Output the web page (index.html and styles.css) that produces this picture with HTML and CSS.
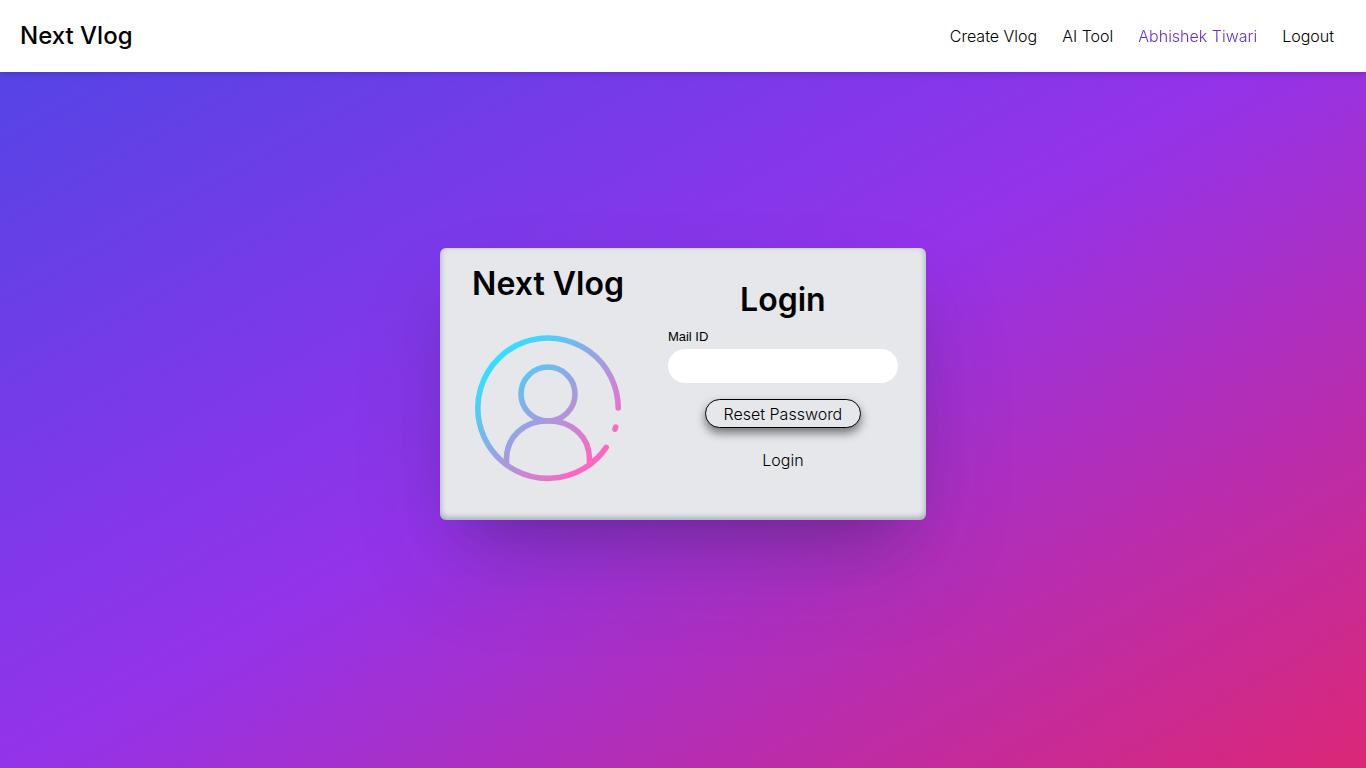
FILE: index.html
```html
<!DOCTYPE html>
<html lang="en">
<head>
<meta charset="utf-8">
<meta name="viewport" content="width=device-width, initial-scale=1">
<title>Next Vlog</title>
<link rel="stylesheet" href="styles.css">
</head>
<body>
<header class="navbar">
  <a class="brand" href="#">Next Vlog</a>
  <nav class="nav-links">
    <a href="#">Create Vlog</a>
    <a href="#">AI Tool</a>
    <a class="user-name" href="#">Abhishek Tiwari</a>
    <a href="#">Logout</a>
  </nav>
</header>
<main class="page">
  <section class="card">
    <div class="intro">
      <h1 class="title">Next Vlog</h1>
      <svg class="avatar" viewBox="0 0 150 150" fill="none" stroke="url(#tint)" stroke-width="5.6" stroke-linecap="round" aria-hidden="true">
        <defs>
          <linearGradient id="tint" gradientUnits="userSpaceOnUse" x1="24" y1="28" x2="120" y2="124">
            <stop offset="0" stop-color="#33dfff"/>
            <stop offset="1" stop-color="#ff66c4"/>
          </linearGradient>
        </defs>
        <path d="M145.200 75A70.200 70.200 0 1 0 133.200 114.400"/>
        <path d="M142.700 94.200L142 96.200"/>
        <circle cx="75" cy="61" r="27"/>
        <path d="M33.500 129V126C33.500 104 51 87.700 75 87.700S116.500 104 116.500 126V129"/>
      </svg>
    </div>
    <form class="login">
      <h2 class="title">Login</h2>
      <div class="field">
        <label for="mail">Mail ID</label>
        <input id="mail" type="email">
      </div>
      <button class="reset" type="button">Reset Password</button>
      <a class="login-link" href="#">Login</a>
    </form>
  </section>
</main>
</body>
</html>
```
FILE: styles.css
```css
* { box-sizing: border-box; }
body {
  margin: 0;
  min-height: 100vh;
  display: flex;
  flex-direction: column;
  font: 300 16px/24px Inter, sans-serif;
  color: #000;
  background: linear-gradient(to bottom right, #4f46e5, #9333ea, #db2777);
}
a { color: inherit; text-decoration: none; }
.navbar {
  display: flex;
  align-items: center;
  justify-content: space-between;
  height: 72px;
  padding: 0 32px 0 20px;
  background: #fff;
  box-shadow: 0 4px 6px -1px rgba(0, 0, 0, 0.1), 0 2px 4px -2px rgba(0, 0, 0, 0.1);
}
.brand { font-size: 24px; line-height: 32px; font-weight: 500; }
.nav-links { display: flex; gap: 25px; }
.nav-links .user-name {
  color: transparent;
  background: linear-gradient(to bottom, #9333ea, #3b1fc0);
  background-clip: text;
  -webkit-background-clip: text;
}
.page {
  flex: 1;
  display: flex;
  align-items: center;
  justify-content: center;
  padding-bottom: 72px;
}
.card {
  display: flex;
  padding: 16px 28px 37px 32px;
  border-radius: 6px;
  background: #e5e7eb;
  box-shadow: rgba(50, 50, 93, 0.25) 0 50px 100px -20px,
    rgba(0, 0, 0, 0.3) 0 30px 60px -30px,
    rgba(10, 37, 64, 0.35) 0 -2px 6px 0 inset;
}
.intro, .login { display: flex; flex-direction: column; align-items: center; }
.intro { gap: 29px; }
.title { margin: 0; font-size: 32px; line-height: 40px; font-weight: 600; }
.avatar { width: 150px; height: 150px; }
.login { margin-left: 44px; padding-top: 16px; }
.field { display: flex; flex-direction: column; gap: 2px; margin: 7px 0 16px; }
.field label { font: 400 13px/20px "Liberation Sans", Arial, sans-serif; }
.field input {
  width: 230px;
  height: 34px;
  padding: 0 16px;
  border: 0;
  border-radius: 17px;
  background: #fff;
  font: inherit;
}
.reset {
  height: 29px;
  padding: 0 18px;
  border: 1px solid #000;
  border-radius: 15px;
  background: #e5e7eb;
  color: #000;
  font: inherit;
  box-shadow: 0 5px 10px rgba(0, 0, 0, 0.5);
}
.login-link { margin-top: 20px; }
```
